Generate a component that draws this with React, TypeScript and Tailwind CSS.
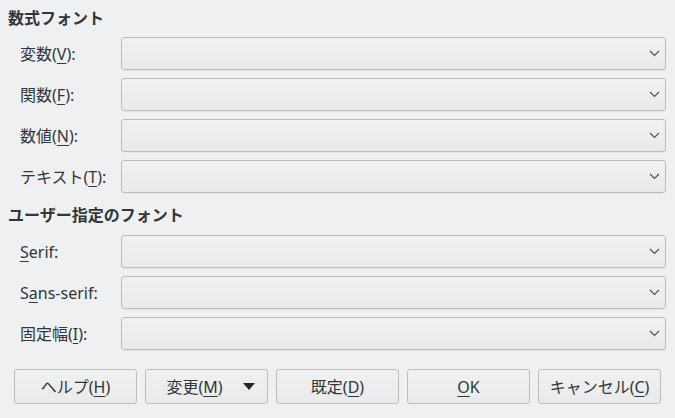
import { FC, ReactNode } from 'react';

const Chevron = () => (
  <svg width="11" height="7" viewBox="0 0 11 7" fill="none" stroke="#4d5257" strokeWidth={1.2}>
    <path d="M1 1l4.5 4.5L10 1" />
  </svg>
);

const Combo = () => (
  <div className="flex-1 h-[33px] rounded-[3px] border border-[#babcbe] bg-gradient-to-b from-[#f0f1f1] to-[#e9eaeb] shadow-[0_1px_0_rgba(0,0,0,0.04)] flex items-center justify-end pr-[5px]">
    <Chevron />
  </div>
);

const Row: FC<{ label: ReactNode }> = ({ label }) => (
  <div className="flex items-center h-[33px]">
    <div className="w-[113px] pl-[12px] shrink-0">{label}</div>
    <Combo />
  </div>
);

const U: FC<{ children: ReactNode }> = ({ children }) => (
  <span className="underline underline-offset-[3px] decoration-1">{children}</span>
);

const Btn: FC<{ children: ReactNode }> = ({ children }) => (
  <div className="w-[123px] h-[35px] rounded-[3px] border border-[#babcbe] bg-gradient-to-b from-[#f0f1f1] to-[#e9eaeb] flex items-center justify-center">
    {children}
  </div>
);

export default function App() {
  return (
    <div
      className="w-[675px] h-[418px] bg-[#eff0f1] text-[#31363b] text-[16px] leading-[20px] overflow-hidden"
      style={{ fontFamily: '"Noto Sans", "Noto Sans CJK JP", sans-serif' }}
    >
      <div className="pt-[8px] pl-[8px] pr-[9px]">
        <div className="font-bold h-[20px]">数式フォント</div>
        <div className="mt-[9px] flex flex-col gap-[8px]">
          <Row label={<>変数(<U>V</U>):</>} />
          <Row label={<>関数(<U>F</U>):</>} />
          <Row label={<>数値(<U>N</U>):</>} />
          <Row label={<>テキスト(<U>T</U>):</>} />
        </div>
        <div className="font-bold h-[20px] mt-[12px]">ユーザー指定のフォント</div>
        <div className="mt-[10px] flex flex-col gap-[8px]">
          <Row label={<><U>S</U>erif:</>} />
          <Row label={<>S<U>a</U>ns-serif:</>} />
          <Row label={<>固定幅(<U>I</U>):</>} />
        </div>
      </div>
      <div className="mt-[19px] pl-[14px] flex gap-[8px]">
        <Btn>ヘルプ(<U>H</U>)</Btn>
        <Btn>
          <span className="ml-[8px]">変更(<U>M</U>)</span>
          <svg className="ml-[20px]" width="12" height="7" viewBox="0 0 12 7">
            <path d="M0 0h12L6 7z" fill="#232629" />
          </svg>
        </Btn>
        <Btn>既定(<U>D</U>)</Btn>
        <Btn><U>O</U>K</Btn>
        <Btn>キャンセル(<U>C</U>)</Btn>
      </div>
    </div>
  );
}
